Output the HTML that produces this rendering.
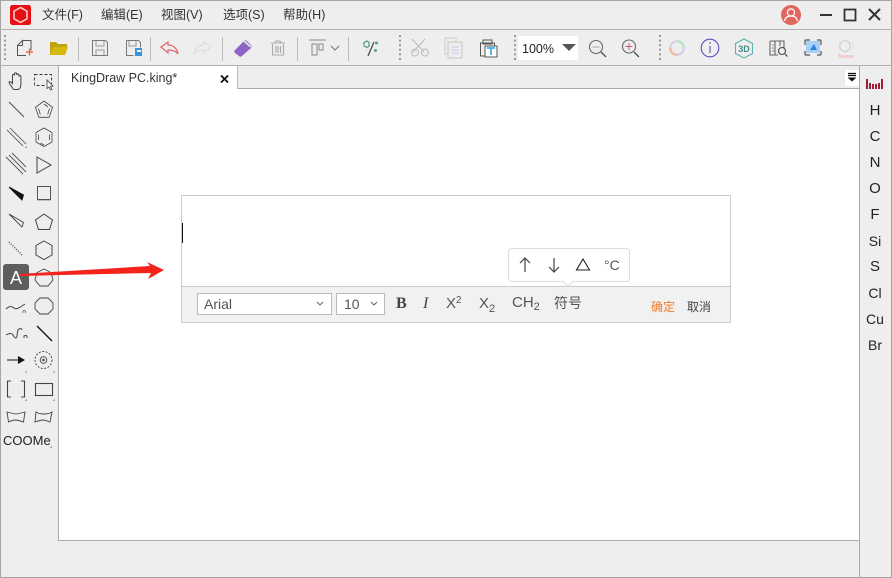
<!DOCTYPE html>
<html><head><meta charset="utf-8">
<style>
html,body{margin:0;padding:0;width:892px;height:578px;overflow:hidden;background:#eee}
body{position:relative;font-family:"Liberation Sans","Noto Sans CJK SC",sans-serif}
.a{position:absolute}
.t{position:absolute;white-space:nowrap;line-height:16px}
.m{font-size:12.5px;color:#333;top:7px}
.el{font-size:15px;color:#222;left:859px;width:32px;text-align:center}
svg{position:absolute;left:0;top:0}
</style></head><body>
<div class="a" style="left:0;top:0;width:892px;height:1px;background:#a5a5a5"></div>
<div class="a" style="left:0;top:0;width:1px;height:578px;background:#a5a5a5"></div>
<div class="a" style="left:891px;top:0;width:1px;height:578px;background:#a5a5a5"></div>
<div class="a" style="left:0;top:577px;width:892px;height:1px;background:#a5a5a5"></div>
<div class="a" style="left:0;top:29px;width:892px;height:1px;background:#b0b0b0"></div>
<div class="a" style="left:0;top:65px;width:892px;height:1px;background:#b0b0b0"></div>
<div class="a" style="left:59px;top:89px;width:800px;height:451px;background:#fff"></div>
<div class="a" style="left:237px;top:88px;width:622px;height:1px;background:#aaa"></div>
<div class="a" style="left:58px;top:66px;width:1px;height:475px;background:#aaa"></div>
<div class="a" style="left:58px;top:540px;width:801px;height:1px;background:#aaa"></div>
<div class="a" style="left:859px;top:66px;width:1px;height:511px;background:#aaa"></div>
<div class="a" style="left:59px;top:66px;width:178px;height:23px;background:#fff"></div>
<div class="a" style="left:237px;top:66px;width:1px;height:23px;background:#bbb"></div>
<div class="a" style="left:518px;top:36px;width:60px;height:24px;background:#fff"></div>
<div class="a" style="left:845px;top:70px;width:14px;height:16px;background:#fff"></div>

<span class="t m" style="left:42px">文件(F)</span>
<span class="t m" style="left:101px">编辑(E)</span>
<span class="t m" style="left:161px">视图(V)</span>
<span class="t m" style="left:223px">选项(S)</span>
<span class="t m" style="left:283px">帮助(H)</span>
<span class="t" style="left:71px;top:70px;font-size:12.5px;color:#333">KingDraw PC.king*</span>
<span class="t" style="left:522px;top:41px;font-size:12.5px;color:#222">100%</span>

<span class="t el" style="top:103px">H</span>
<span class="t el" style="top:129px">C</span>
<span class="t el" style="top:155px">N</span>
<span class="t el" style="top:181px">O</span>
<span class="t el" style="top:207px">F</span>
<span class="t el" style="top:233px;font-size:14px">Si</span>
<span class="t el" style="top:259px">S</span>
<span class="t el" style="top:285px;font-size:14px">Cl</span>
<span class="t el" style="top:311px;font-size:14px">Cu</span>
<span class="t el" style="top:337px;font-size:14px">Br</span>

<div class="a" style="left:3px;top:264px;width:26px;height:26px;background:#5e5e5e;border-radius:3px"></div>
<span class="t" style="left:3px;top:270px;width:26px;text-align:center;font-size:18px;color:#fff">A</span>
<span class="t" style="left:3px;top:433px;font-size:13px;color:#222">COOMe</span>

<!-- editor -->
<div class="a" style="left:181px;top:195px;width:548px;height:126px;border:1px solid #ccc;background:#fff"></div>
<div class="a" style="left:182px;top:286px;width:548px;height:36px;background:#f1f1f1;border-top:1px solid #ccc;box-sizing:border-box"></div>
<div class="a" style="left:182px;top:223px;width:1px;height:20px;background:#111"></div>
<div class="a" style="left:197px;top:293px;width:133px;height:20px;border:1px solid #bbb;background:#fff"></div>
<div class="a" style="left:336px;top:293px;width:47px;height:20px;border:1px solid #bbb;background:#fff"></div>
<span class="t" style="left:204px;top:296px;font-size:14px;color:#555">Arial</span>
<span class="t" style="left:344px;top:296px;font-size:14px;color:#555">10</span>
<span class="t" style="left:396px;top:296px;font-size:16px;font-weight:bold;font-family:'Liberation Serif',serif;color:#444">B</span>
<span class="t" style="left:423px;top:296px;font-size:16px;font-style:italic;font-family:'Liberation Serif',serif;color:#444">I</span>
<span class="t" style="left:446px;top:296px;font-size:15px;color:#555">X<span style="font-size:10px;position:relative;top:-5px">2</span></span>
<span class="t" style="left:479px;top:296px;font-size:15px;color:#555">X<span style="font-size:11px;position:relative;top:4px">2</span></span>
<span class="t" style="left:512px;top:295px;font-size:15px;color:#555">CH<span style="font-size:11px;position:relative;top:3px">2</span></span>
<span class="t" style="left:554px;top:295px;font-size:14px;color:#555">符号</span>
<span class="t" style="left:651px;top:299px;font-size:12px;color:#f47a20">确定</span>
<span class="t" style="left:687px;top:299px;font-size:12px;color:#444">取消</span>
<div class="a" style="left:508px;top:248px;width:120px;height:32px;border:1px solid #ddd;border-radius:4px;background:#fff"></div>
<span class="t" style="left:604px;top:257px;font-size:14px;color:#555">°C</span>

<svg width="892" height="578" viewBox="0 0 892 578" fill="none">
<!-- logo -->
<rect x="10" y="5" width="21" height="20" rx="2.500" fill="#e60f14"/>
<path d="M20.500 7.500l6.500 3.700v7.600l-6.500 3.700-6.500-3.700v-7.600z" stroke="#ffc9c9" stroke-width="1.600"/>
<!-- window controls -->
<circle cx="791" cy="15" r="10" fill="#e0675d"/>
<circle cx="791" cy="12.500" r="3.600" stroke="#fff" stroke-width="1.200"/>
<path d="M784.500 21c.8-4 3.500-5 6.500-5s5.700 1 6.500 5" stroke="#fff" stroke-width="1.200"/>
<path d="M820 15h12" stroke="#333" stroke-width="2"/>
<rect x="844.500" y="9.500" width="11" height="11" stroke="#333" stroke-width="1.800"/>
<path d="M869 9l11 11M880 9l-11 11" stroke="#333" stroke-width="2"/>
<path d="M221 75.500l7 7M228 75.500l-7 7" stroke="#111" stroke-width="1.800"/>
<!-- separators -->
<g stroke="#999" stroke-width="2" stroke-dasharray="2 2.600">
<path d="M5 35v26M400 35v26M515 35v26M660 35v26"/>
</g>
<g stroke="#bbb"><path d="M78.500 37v24M150.500 37v24M222.500 37v24M297.500 37v24M348.500 37v24"/></g>
<!-- new -->
<path d="M22.500 40.500h8.500v10M26 55.500h-8.500v-10l5-5v5h-5" stroke="#555" stroke-width="1"/>
<path d="M26 52h7M29.500 48.500v7" stroke="#f2552c" stroke-width="1.200"/>
<!-- open -->
<path d="M50 42h6l2 2h9v3H54l-4 8z" fill="#bfa40f"/><path d="M54 47h14l-3 8H50z" fill="#d6b90e"/>
<!-- save -->
<path d="M92.500 40.500h13l2 2v13h-15z" stroke="#777"/><path d="M96 41v5h8v-5M96 55v-5h8v5" stroke="#999"/>
<path d="M126.500 40.500h12l2 2v5M126.500 40.500v15h7" stroke="#777"/><path d="M129 41v5h7v-5" stroke="#999"/>
<rect x="135" y="48" width="7" height="8" fill="#3a94dc"/><rect x="137" y="50" width="4" height="2" fill="#fff"/>
<!-- undo redo -->
<path d="M161 47l7-5v3c5 0 9 3 10 9-2-3-6-4-10-4v3z" stroke="#e0656d" stroke-width="1.200"/>
<path d="M211 47l-7-5v3c-5 0-9 3-10 9 2-3 6-4 10-4v3z" stroke="#ddd" stroke-width="1.200"/>
<!-- eraser -->
<path d="M235 50l9-9c1-1 2-1 3 0l4 4c1 1 1 2 0 3l-9 8c-1 1-2 1-3 0l-4-3c-1-1-1-2 0-3z" fill="#8f62c6"/>
<path d="M244 41l7 6" stroke="#ddd" stroke-width="2"/>
<!-- trash -->
<path d="M271 43h14M275 43l1-2h4l1 2M272.500 44v11h11V44M276 46v7M278 46v7M280.500 46v7" stroke="#aaa" stroke-width="1.100"/>
<!-- align -->
<path d="M309 40h17M312 44v11h5V44zM319 44v6h4v-6z" stroke="#888"/>
<path d="M331 46l4 4 4-4" stroke="#777"/>
<!-- magic -->
<path d="M374 42l-6 14" stroke="#555" stroke-width="1.400"/>
<path d="M367 41l-3 1.500v3.500l3 1.500 2-1.500v-3.500z" stroke="#5f9d8a" stroke-width="1.300"/>
<circle cx="376.500" cy="43" r="1.500" fill="#5f9d8a"/><circle cx="375.500" cy="50.500" r="1.500" fill="#5f9d8a"/>
<!-- cut -->
<path d="M412 39l12 13M425 39l-12 13" stroke="#bbb" stroke-width="1.100"/>
<circle cx="415" cy="52.500" r="3.500" stroke="#bbb"/><circle cx="425" cy="52.500" r="3.500" stroke="#bbb"/>
<!-- copy -->
<path d="M445 38h11v3M445 38v16h3" stroke="#ccc"/><rect x="448" y="42" width="14" height="16" stroke="#ccc" stroke-width="1.200"/>
<path d="M451 47h8M451 50h8M451 53h8" stroke="#dcc6e8"/>
<!-- paste -->
<path d="M480.500 43h14v13h-14z" stroke="#555"/><rect x="483" y="40" width="9" height="4" stroke="#555"/>
<rect x="485" y="46" width="12" height="11" fill="#fff" stroke="#555"/>
<path d="M487 48h8M491 48v7" stroke="#3ab0ea" stroke-width="1.800"/>
<!-- combo arrow -->
<path d="M562 44h14l-7 7z" fill="#555"/>
<!-- zoom -->
<circle cx="596" cy="47" r="6.500" stroke="#666" stroke-width="1.100"/><path d="M592.500 47h7" stroke="#9ab" /><path d="M601 52l5 5" stroke="#555" stroke-width="1.400"/>
<circle cx="629" cy="46.500" r="6.500" stroke="#666" stroke-width="1.100"/><path d="M625.500 46.500h7M629 43v7" stroke="#d05a80"/><path d="M634 52l5 5" stroke="#555" stroke-width="1.400"/>
<!-- ring -->
<circle cx="677" cy="48" r="6.700" stroke="#d8d0e8" stroke-width="2.400"/>
<path d="M677 41.300a6.700 6.700 0 0 1 6.700 6.700" stroke="#b8e4c0" stroke-width="2.400"/>
<path d="M677 54.700a6.700 6.700 0 0 1-6.700-6.700" stroke="#f4b8a8" stroke-width="2.400"/>
<!-- info -->
<circle cx="710" cy="48" r="8.800" stroke="#5a50b8" stroke-width="1.100"/>
<path d="M710 46v7" stroke="#6a60c0" stroke-width="1.200"/><circle cx="710" cy="43" r=".9" fill="#6a60c0"/>
<!-- 3D -->
<path d="M744 39l8.500 4.500v10L744 58l-8.500-4.500v-10z" stroke="#62b0ae" stroke-width="1.100"/>
<text x="744" y="52" text-anchor="middle" font-family="Liberation Sans" font-size="9" font-weight="bold" fill="#3c8f8c">3D</text>
<!-- book search -->
<path d="M770 41h14v7M770 41v14h8M775 41v14M780 41v5" stroke="#666" stroke-width="1.100"/><path d="M772 45h2M772 48h2M772 51h2" stroke="#888"/>
<circle cx="782" cy="51" r="3.500" stroke="#444" stroke-width="1.100"/><path d="M785 54l2.500 2.500" stroke="#444" stroke-width="1.200"/>
<!-- image -->
<rect x="806" y="41" width="14" height="12" fill="#a6d0f5"/>
<path d="M810 50l4-6 3 6z" fill="#2f7fdc"/>
<path d="M805 45v-4q0-1 1-1h4M817 40h3q1 0 1 1v4M821 51v3q0 1-1 1h-3M810 55h-4q-1 0-1-1v-3" stroke="#555" stroke-width="1.200"/>
<!-- name -->
<path d="M845 40l5 3v6l-5 3-5-3v-6z" stroke="#ccc" stroke-width="1.100"/><path d="M850 44h3v5" stroke="#ddd"/>
<text x="846" y="58" text-anchor="middle" font-family="Liberation Sans" font-size="5.500" font-weight="bold" fill="#f4b8b4">Name</text>
<!-- tab menu -->
<path d="M848 73.500h8M848 75.500h8" stroke="#111" stroke-width="1.200"/><path d="M847.500 77.500h9l-4.500 4z" fill="#111"/>
<!-- periodic -->
<g fill="#a31e36"><rect x="866" y="79" width="2" height="10"/><rect x="869" y="83" width="2" height="6"/><rect x="872" y="84" width="2" height="5"/><rect x="875" y="84" width="2" height="5"/><rect x="878" y="83" width="2" height="6"/><rect x="881" y="79" width="2" height="10"/></g>
<!-- left tools -->
<g stroke="#444" stroke-width=".9">
<path d="M12.500 88c-2-3-4-5-3.500-6 1-1 2 0 3.500 1.500V75.500c0-1.500 2-1.500 2 0V74c0-1.500 2.200-1.500 2.200 0v1c0-1.500 2.200-1.500 2.200 0v1.500c0-1.200 2-1.200 2 0V84c0 3-1 5-3 5.500h-4c-.500 0-1-.700-1.400-1.500z" stroke-width="1"/>
<rect x="34.500" y="74.500" width="17" height="11" stroke-dasharray="3 2" stroke="#333"/>
<path d="M47 80l6 6-2.500.500 1.500 3-1.500.500-1.500-3-2 1.500z" fill="#fff" stroke="#555"/>
<path d="M9 102l15 15"/>
<path d="M44 101l8.500 6.300-3.200 10h-10.600l-3.200-10zM38.500 108.500l1.800 6M49.500 108.500l-1.800 6M44 104l4 3" stroke-width=".8"/>
<path d="M7 130l16 16M10 128l16 16" stroke="#666"/>
<path d="M44 128l8 4.500v9.500l-8 4.500-8-4.500v-9.500zM49.500 134.500v5.500M38.500 134.500v5.500M40.500 143l3.500 2" stroke-width=".8"/>
<path d="M6 157l17 17M9 155l17 17M12 153l14 14" stroke="#555"/>
<path d="M37 157l14 8-14 8z" stroke-width="1"/>
<path d="M9 187l13 13 1.500-5z" fill="#111" stroke="#111"/><path d="M13 191l7 7 3-3z" fill="#111" stroke="#111"/>
<rect x="37.500" y="186.500" width="13" height="13"/><path d="M37 200.500h14" stroke="#bbb"/>
<path d="M9 214l13 13 1.500-4.500z" stroke="#444"/>
<path d="M44 214l8.500 6-3 9.500h-11l-3-9.500z" stroke-width="1"/>
<path d="M9 242l13 13" stroke-dasharray="1 1.500" stroke-width="1.600" stroke="#555"/>
<path d="M44 241l8 4.500v9.500l-8 4.500-8-4.500v-9.500z" stroke-width="1"/>
<path d="M44 269l7 3.500 2 7.500-5 6h-8l-5-6 2-7.500z"/>
<path d="M40 298h8l5 5v6l-5 5h-8l-5-5v-6z"/>
<path d="M6 309c3-3 6-3 8-1s5 0 11-4" stroke-width="1"/><path d="M23 311v2M25.500 311v2m-2.500-2q1.200-1 2.500 0" stroke="#777"/>
<path d="M6 335c3-2 6-2 7 0s3 5 4 1c.500-3 0-6 2-7s3 0 3 1M24 338v-2q1.500-1 3 0v2" stroke-width="1"/>
<path d="M37 326l15 15" stroke="#111" stroke-width="1.300"/>
<path d="M7 360h14" stroke="#111" stroke-width="1"/><path d="M18 356l7 4-7 4z" fill="#111" stroke="none"/>
<circle cx="43.500" cy="360" r="8.500" stroke-dasharray="2 1.500"/><circle cx="43.500" cy="360" r="3.300"/><circle cx="43.500" cy="360" r=".8" fill="#444"/>
<path d="M11 381H7.500v16H11M21 381h3.500v16H21" stroke-width="1.100"/>
<rect x="35.500" y="383.500" width="17" height="12" stroke-width="1.100"/>
<path d="M7 412c4 1 8 2 9 2s5-1 9-2l-1.500 10c-3-1-6-2-8-2s-5 1-7 2z"/>
<path d="M36 412c3 2 6 2 8 2s5 0 8-2l-2 10c-3-1-5-2-7-2s-5 1-8 2z"/>
</g>
<g fill="#aaa"><path d="M27 148v-2.500l-2.500 2.500zM27 373v-2.500l-2.500 2.500zM55 373v-2.500l-2.500 2.500zM27 401v-2.500l-2.500 2.500zM55 401v-2.500l-2.500 2.500zM52 448v-2.500l-2.500 2.500z"/></g>
<!-- select chevrons -->
<path d="M317 302l3 3 3-3M371 302l3 3 3-3" stroke="#666"/>
<!-- popup arrows -->
<path d="M525 272V258M520 263l5-5 5 5" stroke="#444" stroke-width="1.200"/>
<path d="M554 258v14M549 267l5 5 5-5" stroke="#444" stroke-width="1.200"/>
<path d="M583 259l6.500 11h-13z" stroke="#222" stroke-width="1.100"/>
<path d="M562 280.500l6 6 6-6" fill="#fff" stroke="#ddd"/><path d="M562.800 280h10.400v1h-10.400z" fill="#fff"/>
<!-- red arrow -->
<path d="M19 274L150 266 147 262 164 270 148 279 151 273 19 276z" fill="#f3221a"/>
</svg>
</body></html>
